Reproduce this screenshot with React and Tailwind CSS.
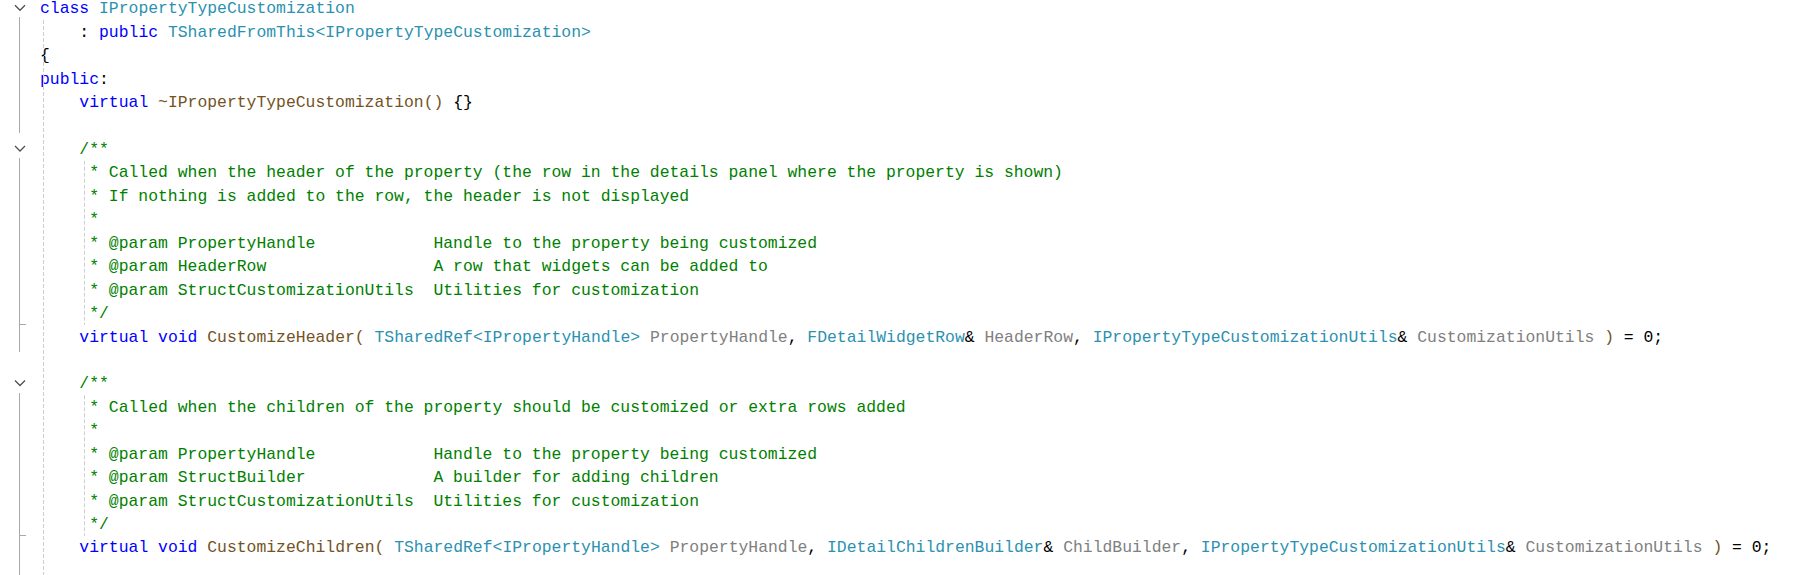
import React from "react";

const K = "text-[#0000ff]";
const T = "text-[#2b91af]";
const F = "text-[#74531f]";
const P = "text-[#808080]";
const C = "text-[#008000]";

const prm = (name, desc) => "     * @param " + name.padEnd(26) + desc;

const LINES = [
  [["class", K], [" "], ["IPropertyTypeCustomization", T]],
  [["    : "], ["public", K], [" "], ["TSharedFromThis", T], ["<", T], ["IPropertyTypeCustomization", T], [">", T]],
  [["{"]],
  [["public", K], [":"]],
  [["    "], ["virtual", K], [" "], ["~IPropertyTypeCustomization", F], ["()", F], [" {}"]],
  [],
  [["    /**", C]],
  [["     * Called when the header of the property (the row in the details panel where the property is shown)", C]],
  [["     * If nothing is added to the row, the header is not displayed", C]],
  [["     *", C]],
  [[prm("PropertyHandle", "Handle to the property being customized"), C]],
  [[prm("HeaderRow", "A row that widgets can be added to"), C]],
  [[prm("StructCustomizationUtils", "Utilities for customization"), C]],
  [["     */", C]],
  [
    ["    "], ["virtual", K], [" "], ["void", K], [" "], ["CustomizeHeader", F], ["(", F], [" "],
    ["TSharedRef", T], ["<", T], ["IPropertyHandle", T], [">", T], [" "], ["PropertyHandle", P], [", "],
    ["FDetailWidgetRow", T], ["&"], [" "], ["HeaderRow", P], [", "],
    ["IPropertyTypeCustomizationUtils", T], ["&"], [" "], ["CustomizationUtils", P], [" "], [")", F], [" = 0;"],
  ],
  [],
  [["    /**", C]],
  [["     * Called when the children of the property should be customized or extra rows added", C]],
  [["     *", C]],
  [[prm("PropertyHandle", "Handle to the property being customized"), C]],
  [[prm("StructBuilder", "A builder for adding children"), C]],
  [[prm("StructCustomizationUtils", "Utilities for customization"), C]],
  [["     */", C]],
  [
    ["    "], ["virtual", K], [" "], ["void", K], [" "], ["CustomizeChildren", F], ["(", F], [" "],
    ["TSharedRef", T], ["<", T], ["IPropertyHandle", T], [">", T], [" "], ["PropertyHandle", P], [", "],
    ["IDetailChildrenBuilder", T], ["&"], [" "], ["ChildBuilder", P], [", "],
    ["IPropertyTypeCustomizationUtils", T], ["&"], [" "], ["CustomizationUtils", P], [" "], [")", F], [" = 0;"],
  ],
  [],
];

const LH = 23.45;
const cy = (i) => 8.3 + LH * i;

function Chevron({ y }) {
  return (
    <polyline
      points={`15,${y - 3} 20,${y + 2} 25,${y - 3}`}
      fill="none"
      stroke="#505050"
      strokeWidth="1.3"
    />
  );
}

function Gutter() {
  return (
    <div className="w-[40px] shrink-0">
      <svg width="40" height="575" viewBox="0 0 40 575">
        <Chevron y={cy(0)} />
        <Chevron y={cy(6)} />
        <Chevron y={cy(16)} />
        <g stroke="#a8a8a8" strokeWidth="1">
          <line x1="19.5" y1="17" x2="19.5" y2="133" />
          <line x1="19.5" y1="158" x2="19.5" y2="352" />
          <line x1="19.5" y1="393" x2="19.5" y2="575" />
          <line x1="19.5" y1="324.5" x2="26" y2="324.5" />
          <line x1="19.5" y1="535.5" x2="26" y2="535.5" />
        </g>
      </svg>
    </div>
  );
}

export default function App() {
  const g2a = cy(7) - 11.7;
  const g2b = cy(13) + 11.7;
  const g3a = cy(17) - 11.7;
  const g3b = cy(22) + 11.7;
  return (
    <div className="w-[1805px] h-[575px] overflow-hidden bg-white flex">
      <Gutter />
      <div className="relative flex-1 min-w-0">
        <svg
          className="absolute left-0 top-0 pointer-events-none"
          width="60"
          height="575"
          viewBox="0 0 60 575"
        >
          <g stroke="#cfcfcf" strokeWidth="1" strokeDasharray="4 2">
            <line x1="3.5" y1="20" x2="3.5" y2="575" />
            <line x1="44.5" y1={g2a} x2="44.5" y2={g2b} />
            <line x1="44.5" y1={g3a} x2="44.5" y2={g3b} />
          </g>
        </svg>
        <div className="mt-[-2.6px] font-['Liberation_Mono',monospace] text-[16.4px] leading-[23.45px] whitespace-pre text-black">
          {LINES.map((toks, i) => (
            <div key={i} className="h-[23.45px]">
              {toks.length === 0
                ? " "
                : toks.map(([t, c], j) => (
                    <span key={j} className={c || ""}>
                      {t}
                    </span>
                  ))}
            </div>
          ))}
        </div>
      </div>
    </div>
  );
}
